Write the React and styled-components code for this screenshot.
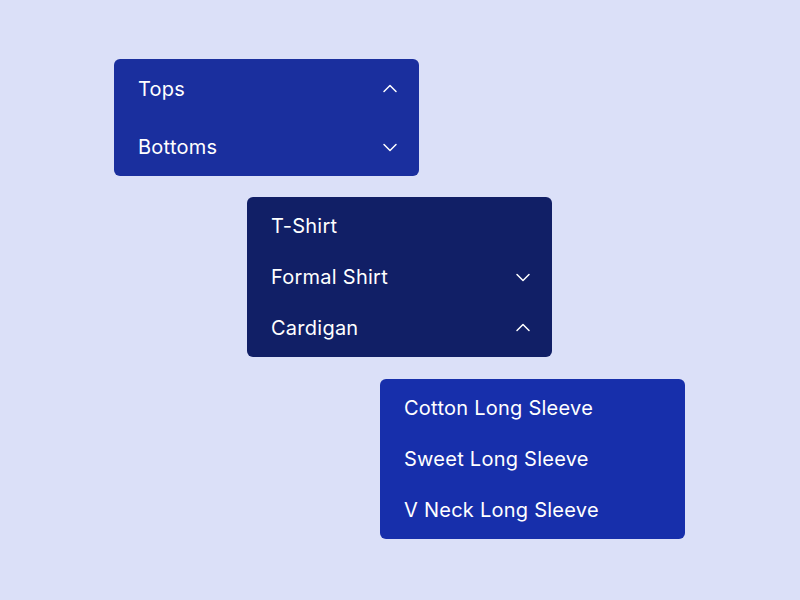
import React from "react";
import styled, { createGlobalStyle } from "styled-components";

const GlobalStyle = createGlobalStyle`
  html, body {
    margin: 0;
    padding: 0;
    background: #dbe0f8;
    font-family: Inter, "Noto Sans", sans-serif;
  }
`;

const menus = [
  {
    color: "#1a2f9e",
    rowHeight: 58,
    pad: 0.5,
    gap: 0,
    items: [
      { label: "Tops", chevron: "up" },
      { label: "Bottoms", chevron: "down" },
    ],
  },
  {
    color: "#111f66",
    rowHeight: 51,
    pad: 3.5,
    gap: 21,
    items: [
      { label: "T-Shirt" },
      { label: "Formal Shirt", chevron: "down" },
      { label: "Cardigan", chevron: "up" },
    ],
  },
  {
    color: "#172fab",
    rowHeight: 51,
    pad: 3.5,
    gap: 22,
    items: [
      { label: "Cotton Long Sleeve" },
      { label: "Sweet Long Sleeve" },
      { label: "V Neck Long Sleeve" },
    ],
  },
];

const Chevron = ({ dir }) => (
  <svg width="16" height="16" viewBox="0 0 16 16" fill="none">
    <path
      d={dir === "up" ? "M2 10.5 L8 4.5 L14 10.5" : "M2 5.5 L8 11.5 L14 5.5"}
      stroke="#fff"
      strokeWidth="1.5"
      strokeLinecap="round"
      strokeLinejoin="round"
    />
  </svg>
);

const App = () => (
  <>
    <GlobalStyle />
    <Page>
      {menus.map((menu, i) => (
        <Panel
          key={i}
          $bg={menu.color}
          $pad={menu.pad}
          $top={menu.gap}
          $indent={114 + i * 133}
        >
          {menu.items.map((item) => (
            <Row key={item.label} $h={menu.rowHeight}>
              <Label>{item.label}</Label>
              {item.chevron && <Chevron dir={item.chevron} />}
            </Row>
          ))}
        </Panel>
      ))}
    </Page>
  </>
);

export default App;

const Page = styled.div`
  width: 800px;
  height: 600px;
  padding-top: 59px;
  box-sizing: border-box;
  display: flex;
  flex-direction: column;
`;

const Panel = styled.div`
  width: 305px;
  margin-left: ${(p) => p.$indent}px;
  margin-top: ${(p) => p.$top}px;
  background: ${(p) => p.$bg};
  border-radius: 6px;
  padding: ${(p) => p.$pad}px 0;
  box-sizing: border-box;
`;

const Row = styled.div`
  height: ${(p) => p.$h}px;
  display: flex;
  align-items: center;
  justify-content: space-between;
  padding: 0 21px 0 24px;
`;

const Label = styled.span`
  color: #fff;
  font-size: 20px;
  letter-spacing: 0.25px;
`;
